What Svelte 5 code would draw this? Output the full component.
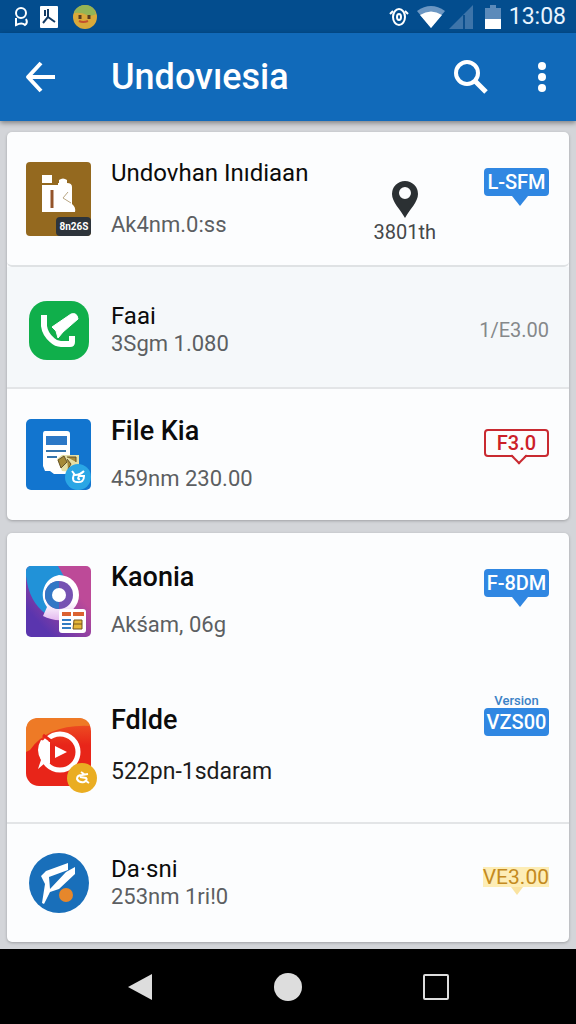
<script lang="ts">
  type IconName = 'box' | 'phone' | 'doc' | 'chat' | 'play' | 'pen';
  type TagKind = 'solid' | 'outline' | 'plain' | 'stacked' | 'highlight';

  interface Item {
    icon: IconName;
    title: string;
    detail: string;
    tag: string;
    kind: TagKind;
    size: string;
    caption?: string;
    place?: string;
  }

  const groups: Item[][] = [
    [
      { icon: 'box', title: 'Undovhan Inıdiaan', detail: 'Ak4nm.0:ss', tag: 'L-SFM', kind: 'solid', size: 'lead', place: '3801th' },
      { icon: 'phone', title: 'Faai', detail: '3Sgm 1.080', tag: '1/E3.00', kind: 'plain', size: 'compact tinted' },
      { icon: 'doc', title: 'File Kia', detail: '459nm 230.00', tag: 'F3.0', kind: 'outline', size: 'medium' }
    ],
    [
      { icon: 'chat', title: 'Kaonia', detail: 'Akśam, 06g', tag: 'F-8DM', kind: 'solid', size: 'large' },
      { icon: 'play', title: 'Fdlde', detail: '522pn-1sdaram', tag: 'VZS00', kind: 'stacked', size: 'tall', caption: 'Version' },
      { icon: 'pen', title: 'Da·sni', detail: '253nm 1ri!0', tag: 'VE3.00', kind: 'highlight', size: 'compact' }
    ]
  ];
</script>

<div class="screen">
  <div class="status">
    <div class="status-group">
      <svg width="16" height="20" viewBox="0 0 16 20" fill="none" stroke="#fff" stroke-width="2">
        <circle cx="7" cy="6" r="5" />
        <path d="M2 11v7q6-3 9 0 3-2 1-6" />
      </svg>
      <svg width="18" height="22" viewBox="0 0 18 22">
        <rect width="18" height="22" rx="1" fill="#fff" />
        <path d="M5 4v6M8 3v8l-5 6M8 11l7 5" fill="none" stroke="#123a63" stroke-width="2" />
      </svg>
      <svg class="face" width="24" height="24" viewBox="0 0 24 24">
        <circle cx="12" cy="12" r="12" fill="#d9a93a" />
        <path d="M1 8Q4 0 12 0q9 0 11 9-5 3-9 1-6-3-13-2" fill="#94b556" />
        <path d="M7 10v4M16 10v4" stroke="#5a3c20" stroke-width="3" />
        <path d="M6 16q4 2 9 0" fill="none" stroke="#c4502c" stroke-width="2" />
      </svg>
    </div>
    <div class="status-group right">
      <svg width="20" height="18" viewBox="0 0 20 18" fill="none" stroke="#fff" stroke-width="2">
        <ellipse cx="10" cy="9" rx="6" ry="8" />
        <ellipse cx="10" cy="9" rx="2" ry="3" />
        <path d="M1 6l3-3M19 6l-3-3" />
      </svg>
      <svg width="28" height="22" viewBox="0 0 28 22">
        <path d="M0 5Q14-5 28 5L14 22z" fill="#6c97c3" />
        <path d="M3 9q11-7 22 0L14 22z" fill="#fff" />
      </svg>
      <svg width="24" height="24" viewBox="0 0 24 24">
        <path d="M0 24L24 0v24z" fill="#3d74a9" />
        <path d="M15 24V10" stroke="#0c4f8d" stroke-width="2" />
      </svg>
      <svg class="battery" width="16" height="24" viewBox="0 0 16 24">
        <path d="M0 3h5V0h6v3h5v12H0z" fill="#5b8aba" />
        <path d="M0 14h16v10H0z" fill="#fff" />
      </svg>
      <span class="time">13:08</span>
    </div>
  </div>

  <header class="bar">
    <button class="bar-button" aria-label="Back">
      <svg width="30" height="30" viewBox="0 0 30 30" fill="none" stroke="#fff" stroke-width="4" stroke-linejoin="round">
        <path d="M2 15h27M15 1L2 15l13 14" />
      </svg>
    </button>
    <h1>Undovıesia</h1>
    <button class="bar-button" aria-label="Search">
      <svg width="36" height="36" viewBox="0 0 36 36" fill="none" stroke="#fff">
        <circle cx="14" cy="14" r="11" stroke-width="4" />
        <path d="M22 22L33 33" stroke-width="5" />
      </svg>
    </button>
    <button class="bar-button more" aria-label="More options">
      <svg width="10" height="30" viewBox="0 0 10 30" fill="#fff">
        <circle cx="5" cy="4" r="4" />
        <circle cx="5" cy="15" r="4" />
        <circle cx="5" cy="26" r="4" />
      </svg>
    </button>
  </header>

  <main>
    {#each groups as group}
      <ul class="card">
        {#each group as item}
          <li class="row {item.size}">
            <div class="icon">
              {#if item.icon === 'box'}
                <svg width="65" height="74" viewBox="0 0 65 74">
                  <rect width="65" height="74" rx="4" fill="#94691f" />
                  <path d="M16 13h10v8h7v-3q4-3 8 0v3q5 0 5 4v17q4 3 3 8H16V23h0z" fill="#fff" />
                  <path d="M15 22h17" stroke="#94691f" stroke-width="2" />
                  <path d="M26 28v18" stroke="#94542a" stroke-width="3" />
                  <path d="M42 30l-5 6 8 5" fill="none" stroke="#b9a683" stroke-width="1" />
                  <rect x="30" y="55" width="35" height="19" rx="4" fill="#2d343b" />
                  <text x="48" y="68" font-size="10" font-weight="700" fill="#fff" text-anchor="middle">8n26S</text>
                </svg>
              {:else if item.icon === 'phone'}
                <svg width="60" height="59" viewBox="0 0 60 59">
                  <rect width="60" height="59" rx="18" fill="#10af4b" />
                  <path
                    d="M15 14v11q1 8 8 14 4 4 9 4h9q2 0 2-2v-6"
                    fill="none"
                    stroke="#fff"
                    stroke-width="6"
                  />
                  <path d="M23 26L42 13q6-2 7 5L34 31l-5 6-2-7z" fill="#fff" stroke="#fff" stroke-linejoin="round" />
                </svg>
              {:else if item.icon === 'doc'}
                <svg width="65" height="71" viewBox="0 0 65 71">
                  <rect width="65" height="71" rx="5" fill="#1275cf" />
                  <path d="M18 12h23q3 0 3 3v22l4 14-8 4H28l-4-3h-5l-2-5V15q0-3 2-3z" fill="#fff" />
                  <path d="M20 17h21v9H20z" fill="#2c78c6" />
                  <path d="M20 32h20M21 38h10" stroke="#3474ac" stroke-width="2" />
                  <path d="M31 40l5-4h9l8 0v10l-8 7-9-1z" fill="#e5dfa5" />
                  <path d="M32 41l6-4 3 6-6 6zM41 38l9 0v5M41 40l4 5-3 5" fill="#a58a38" stroke="#65522a" stroke-width="1" />
                  <circle cx="52" cy="58" r="13" fill="#2aa6e5" />
                  <path d="M46 52l3 4q5 0 9-4M48 55q-3 8 3 8 7 1 7-6h-5q-2 4 1 3" fill="none" stroke="#fff" stroke-width="2" />
                </svg>
              {:else if item.icon === 'chat'}
                <svg width="65" height="71" viewBox="0 0 65 71">
                  <defs>
                    <clipPath id="chat-clip"><rect width="65" height="71" rx="5" /></clipPath>
                    <linearGradient id="chat-bg" x1="1" y1="0" x2="0" y2="1">
                      <stop offset="0.3" stop-color="#bd4a98" />
                      <stop offset="0.8" stop-color="#5a35ae" />
                    </linearGradient>
                    <linearGradient id="chat-ring" x1="0" y1="0" x2="0" y2="1">
                      <stop offset="0.6" stop-color="#fff" />
                      <stop offset="1" stop-color="#e4b9ef" />
                    </linearGradient>
                  </defs>
                  <g clip-path="url(#chat-clip)">
                    <rect width="65" height="71" fill="url(#chat-bg)" />
                    <path d="M0 0h32l8 14-20 34Q3 36 0 10z" fill="#2192d8" />
                  </g>
                  <path d="M33 9a20 20 0 0 1 0 40q3 2 5 5-12 1-21-4l4-9A20 20 0 0 1 33 9z" fill="url(#chat-ring)" />
                  <circle cx="33" cy="29" r="14" fill="#7652b2" />
                  <path d="M33 15a14 14 0 0 0 0 28z" fill="#3277c5" />
                  <circle cx="33" cy="29" r="7" fill="#fff" />
                  <rect x="33" y="43" width="27" height="24" rx="3" fill="#fff" />
                  <path d="M36 46h9v4h-9zM47 46h11v4H47z" fill="#db6230" />
                  <path d="M36 54h9M36 58h9M36 62h9" stroke="#327dc3" stroke-width="2" />
                  <path d="M48 54h8v9h-9zM48 58h8" fill="#e5b638" stroke="#77541c" stroke-width="1" />
                </svg>
              {:else if item.icon === 'play'}
                <svg width="65" height="68" viewBox="0 0 65 68">
                  <defs>
                    <linearGradient id="play-bg" x1="0" y1="0" x2="0" y2="1">
                      <stop offset="0" stop-color="#ee5a24" />
                      <stop offset="0.4" stop-color="#e82519" />
                    </linearGradient>
                  </defs>
                  <rect width="65" height="68" rx="13" fill="url(#play-bg)" />
                  <path d="M0 34V13Q0 0 13 0h39q10 0 12 8Q22 6 4 32z" fill="#ee7a26" />
                  <circle cx="34" cy="34" r="18" fill="none" stroke="#fff" stroke-width="5" />
                  <path d="M15 22l9 2v21q-2 3-5 0l-7 6 3-9q-6-10 0-20z" fill="#fff" />
                  <path d="M17 17l8 6" stroke="#e82519" stroke-width="3" />
                  <path d="M29 28l12 6-12 6z" fill="#fff" />
                  <circle cx="56" cy="60" r="15" fill="#eaad22" />
                  <path d="M62 56l-6 1q-5 0-5 4 2 4 7 3 4-2 2-4l-6-1M55 54l3 2M60 63l3 2" fill="none" stroke="#fff" stroke-width="2" />
                </svg>
              {:else}
                <svg width="60" height="60" viewBox="0 0 60 60">
                  <circle cx="30" cy="30" r="30" fill="#196fba" />
                  <path
                    d="M12 23L17 18 39 10v7L20 24l1 12L37 19l9-5v7L30 36l-9 3-6 12-2-1 3-19z"
                    fill="#fff"
                  />
                  <circle cx="37" cy="42" r="7" fill="#e6872b" />
                </svg>
              {/if}
            </div>

            <div class="text">
              <h2>{item.title}</h2>
              <p>{item.detail}</p>
            </div>

            {#if item.place}
              <div class="place">
                <svg width="26" height="37" viewBox="0 0 26 37">
                  <path
                    d="M13 0a13 13 0 0 1 13 13c0 8-8 15-13 24C8 28 0 21 0 13A13 13 0 0 1 13 0zm0 6a6 6 0 1 0 0 12 6 6 0 0 0 0-12z"
                    fill="#2b3033"
                  />
                </svg>
                <span>{item.place}</span>
              </div>
            {/if}

            <div class="meta {item.kind}">
              {#if item.caption}<span class="caption">{item.caption}</span>{/if}
              <span class="tag">{item.tag}</span>
            </div>
          </li>
        {/each}
      </ul>
    {/each}
  </main>

  <nav>
    <button aria-label="Back">
      <svg width="26" height="28" viewBox="0 0 26 28"><path d="M25 1v26L1 14z" fill="#ddd" /></svg>
    </button>
    <button aria-label="Home">
      <svg width="28" height="28" viewBox="0 0 28 28"><circle cx="14" cy="14" r="14" fill="#ddd" /></svg>
    </button>
    <button aria-label="Recent apps">
      <svg width="26" height="26" viewBox="0 0 26 26">
        <rect x="1" y="1" width="24" height="24" rx="1" fill="none" stroke="#ddd" stroke-width="2" />
      </svg>
    </button>
  </nav>
</div>

<style>
  :global(body) {
    margin: 0;
  }

  .screen {
    display: flex;
    flex-direction: column;
    min-height: 100vh;
    font-family: Roboto, 'Liberation Sans', sans-serif;
    background: #d3d5d9;
  }

  svg {
    display: block;
    overflow: visible;
  }

  button {
    display: flex;
    align-items: center;
    justify-content: center;
    padding: 0;
    border: 0;
    background: none;
  }

  .status {
    display: flex;
    align-items: center;
    justify-content: space-between;
    height: 33px;
    padding: 0 10px 0 14px;
    background: #034d8e;
  }

  .status-group {
    display: flex;
    align-items: center;
    gap: 10px;
  }

  .face {
    margin-left: 5px;
  }

  .status-group.right {
    gap: 8px;
  }

  .right svg:nth-child(3) {
    margin-left: -4px;
  }

  .battery {
    margin-left: 4px;
  }

  .time {
    font-size: 23px;
    line-height: 32px;
    color: #e8f4ff;
  }

  .bar {
    position: relative;
    display: flex;
    align-items: center;
    height: 88px;
    padding: 0 26px;
    background: #116aba;
    box-shadow: 0 2px 5px rgba(0, 0, 0, 0.4);
  }

  h1 {
    flex: 1;
    margin: 0 0 0 55px;
    font-size: 36px;
    line-height: 44px;
    font-weight: 500;
    color: #fff;
  }

  .more {
    margin-left: 45px;
    width: 16px;
  }

  main {
    flex: 1;
    display: flex;
    flex-direction: column;
    gap: 13px;
    padding: 11px 7px 7px;
  }

  .card {
    margin: 0;
    padding: 0;
    list-style: none;
    background: #fcfdfe;
    border-radius: 5px;
    box-shadow: 0 1px 3px rgba(0, 0, 0, 0.25);
  }

  .row {
    display: flex;
    align-items: center;
    gap: 20px;
    box-sizing: border-box;
    padding: 0 20px 0 19px;
  }

  .lead {
    min-height: 135px;
    border-bottom: 2px solid #dfe2e4;
    border-radius: 0 0 5px 5px;
  }

  .compact {
    min-height: 118px;
  }

  .tinted {
    min-height: 122px;
    padding-top: 6px;
    background: #f5f8fa;
    border-bottom: 2px solid #e3e5e7;
  }

  .medium {
    min-height: 131px;
  }

  .large {
    min-height: 136px;
  }

  .tall {
    min-height: 155px;
    border-bottom: 2px solid #e3e5e7;
  }

  .icon {
    display: flex;
    justify-content: center;
    width: 65px;
  }

  .tall .icon {
    margin-top: 12px;
  }

  .text {
    flex: 1;
    display: flex;
    flex-direction: column;
  }

  .lead .text,
  .tall .text {
    gap: 24px;
  }

  .medium .text,
  .large .text {
    gap: 20px;
  }

  h2 {
    margin: 0;
    font-size: 27px;
    line-height: 28px;
    font-weight: 500;
    color: #0b0b0b;
  }

  .lead h2,
  .compact h2 {
    font-size: 24px;
    font-weight: 400;
  }

  p {
    margin: 0;
    font-size: 22px;
    line-height: 28px;
    font-weight: 400;
    color: #5c5f62;
  }

  .tall p {
    font-size: 23px;
    color: #1c1c1c;
  }

  .place {
    display: flex;
    flex-direction: column;
    align-items: center;
    align-self: flex-start;
    margin-right: 28px;
    padding-top: 49px;
    font-size: 20px;
    line-height: 28px;
    color: #45484a;
  }

  .meta {
    display: flex;
    flex-direction: column;
    align-items: flex-end;
  }

  .solid,
  .outline {
    align-self: flex-start;
    padding-top: 36px;
  }

  .tag {
    box-sizing: border-box;
    min-width: 65px;
    font-size: 22px;
    line-height: 28px;
    text-align: center;
  }

  .solid .tag,
  .outline .tag,
  .highlight .tag {
    position: relative;
  }

  .solid .tag,
  .stacked .tag {
    border-radius: 4px;
    background: #3087e2;
    color: #fff;
    font-size: 20px;
    font-weight: 500;
  }

  .solid .tag::after,
  .highlight .tag::after {
    content: '';
    position: absolute;
    top: 100%;
    left: 50%;
    border: 8px solid transparent;
    border-top: 10px solid #3087e2;
    border-bottom: 0;
    transform: translateX(-5px);
  }

  .outline .tag {
    margin-top: 4px;
    border: 2px solid #c92a31;
    border-radius: 4px;
    font-size: 20px;
    line-height: 24px;
    font-weight: 500;
    color: #cc2028;
  }

  .outline .tag::after {
    content: '';
    position: absolute;
    top: 19px;
    left: 50%;
    width: 10px;
    height: 10px;
    border: 2px solid #c92a31;
    border-top: 0;
    border-left: 0;
    background: linear-gradient(135deg, transparent 50%, #fcfdfe 50%);
    transform: translateX(-4px) rotate(45deg);
  }

  .plain .tag {
    color: #85888a;
    font-size: 20px;
  }

  .stacked {
    align-self: flex-start;
    padding-top: 25px;
  }

  .caption {
    align-self: center;
    font-size: 13px;
    line-height: 14px;
    font-weight: 500;
    color: #3b82c6;
  }

  .highlight .tag {
    font-size: 21px;
    line-height: 20px;
    background: #fdedb6;
    color: #c48a20;
  }

  .highlight {
    padding-bottom: 12px;
  }

  .highlight .tag::after {
    border-width: 8px 6px 0;
    border-top-color: #fae3a0;
  }

  nav {
    display: flex;
    height: 76px;
    padding: 0 66px;
    background: #000;
  }

  nav button {
    flex: 1;
  }
</style>
